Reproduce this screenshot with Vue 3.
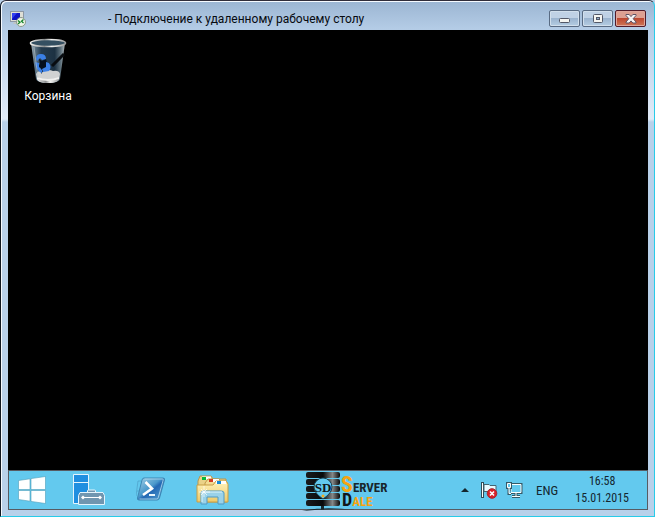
<template>
  <div class="window">
    <header class="titlebar">
      <svg class="app-icon" width="16" height="16" viewBox="0 0 16 16" aria-hidden="true">
        <rect x="0.5" y="0.5" width="13" height="10" fill="#dedfd6" stroke="#8d98a5" />
        <rect x="2" y="2" width="8" height="7" fill="#1013c4" />
        <path d="M2 2h5l-5 6z" fill="#3340f0" />
        <path d="M4 11h5v2H3z" fill="#bfc5c4" />
        <circle cx="11" cy="11" r="4.5" fill="#f0f5e8" stroke="#8c998b" />
        <path d="M8 9.5l2 1.7-2 1.8M13.5 8.5l-2 1.7 2 1.8" fill="none" stroke="#15842b" stroke-width="1.3" />
      </svg>
      <h1>- Подключение к удаленному рабочему столу</h1>
      <div class="controls">
        <button type="button" aria-label="Свернуть">
          <svg width="12" height="12" viewBox="0 0 12 12">
            <rect x="0.5" y="5.5" width="10" height="4" rx="1" fill="#f5f5f1" stroke="#535867" />
          </svg>
        </button>
        <button type="button" aria-label="Развернуть">
          <svg width="12" height="12" viewBox="0 0 12 12">
            <rect x="1.5" y="1.5" width="9" height="8" rx="1" fill="#f5f5f1" stroke="#535867" />
            <rect x="4.5" y="4.5" width="3" height="2" fill="#91adc9" stroke="#535867" />
          </svg>
        </button>
        <button type="button" class="close" aria-label="Закрыть">
          <svg width="12" height="12" viewBox="0 0 12 12">
            <path d="M1 1.5h3.2L6 3.6l1.8-2.1H11v1L8.2 5.7 11 9v1H7.8L6 7.9 4.2 10H1V9l2.8-3.3L1 2.5z" fill="#f7f5f5" stroke="#5f5364" />
          </svg>
        </button>
      </div>
    </header>

    <main class="screen">
      <section class="desktop">
        <a class="shortcut" href="#">
          <svg width="38" height="46" viewBox="0 0 38 46" aria-hidden="true">
            <defs>
              <linearGradient id="glass" x1="0" x2="1" y1="0" y2="0">
                <stop offset="0" stop-color="#a3b0b8" />
                <stop offset="0.12" stop-color="#5d7485" />
                <stop offset="0.3" stop-color="#243b4e" />
                <stop offset="0.7" stop-color="#1c3142" />
                <stop offset="0.88" stop-color="#61747f" />
                <stop offset="1" stop-color="#b4bcc0" />
              </linearGradient>
              <linearGradient id="metal" x1="0" x2="1" y1="0" y2="0">
                <stop offset="0" stop-color="#eeeeec" />
                <stop offset="0.4" stop-color="#8b8e8f" />
                <stop offset="0.6" stop-color="#f3f3f1" />
                <stop offset="1" stop-color="#989a9b" />
              </linearGradient>
            </defs>
            <path d="M2 5h34l-5 36q-1 4-12 4T7 41z" fill="url(#glass)" />
            <path d="M35 16L23 28" stroke="#080c10" stroke-width="3" />
            <path d="M7 36q2-4 8-3 5-2 9 0 6-1 7 3l-1 5q-1 4-11 4T8 41z" fill="#d0d2d2" />
            <path d="M8 39q11 4 22 0v2q-11 4-22 0z" fill="#f0f0ee" />
            <path d="M8 41q11 4 22 0-1 4-11 4T8 41z" fill="url(#metal)" />
            <path d="M10 21l3 2 4-2 1 4 3 1-3 2 1 5-4-1-3 4v-6l-4-1 3-3z" fill="#05101d" />
            <path d="M7 21q0-5 5-5 5 0 5 5l-4 1-2-2-3 3zM6 24l4 1 0 4 3 3 0 3q-6-2-7-11zM17 24l3 1q3 4 0 8l-6 1-1-3 4-2z" fill="#3b80e6" />
            <ellipse cx="19" cy="5" rx="17.5" ry="3.5" fill="#344f61" stroke="url(#metal)" stroke-width="1.6" />
            <path d="M5 9l4 31" stroke="#bac4c8" opacity="0.6" />
          </svg>
          <span>Корзина</span>
        </a>
      </section>

      <footer class="taskbar">
        <nav class="launchers">
          <button type="button" class="start" aria-label="Пуск">
            <svg width="28" height="28" viewBox="0 0 28 28">
              <path d="M0.5 4.5L12 2.8v10.7H0.5zM13 2.6L27.5.5v13H13zM0.5 14.5H12v10.7L0.5 23.5zM13 14.5h14.5v13L13 25.4z" fill="#fff" stroke="#4d9eb9" stroke-width="0.6" />
            </svg>
          </button>
          <button type="button" class="manager" aria-label="Диспетчер серверов">
            <svg width="34" height="34" viewBox="0 0 34 34">
              <path d="M1.5 1.5h15v29h-15z" fill="#1f8fe0" stroke="#e3f4fc" />
              <path d="M1.5 9.5h15" stroke="#e3f4fc" />
              <path d="M15.5 20v-2q0-1 1-1h6q1 0 1 1v2" fill="#7096b0" stroke="#e3f4fc" />
              <path d="M8 19.5h23l1.5 3v9h-26v-9z" fill="#7096b0" stroke="#e3f4fc" />
              <path d="M11 24.5h17" stroke="#fff" />
              <path d="M9 24.5l2-2 2 2-2 2zM26 24.5l2-2 2 2-2 2z" fill="#fff" />
            </svg>
          </button>
          <button type="button" class="powershell" aria-label="Windows PowerShell">
            <svg width="30" height="26" viewBox="0 0 30 26">
              <defs>
                <linearGradient id="shell" x1="0" x2="1" y1="0" y2="1">
                  <stop offset="0" stop-color="#a5d3e8" />
                  <stop offset="0.45" stop-color="#4a98cb" />
                  <stop offset="0.55" stop-color="#2468b4" />
                  <stop offset="1" stop-color="#5aa6d4" />
                </linearGradient>
              </defs>
              <path d="M5 4H2L0 19M1 14h3" fill="none" stroke="#4f9fc8" opacity="0.7" />
              <path d="M8 1h19q2 0 1.5 2l-5 18q-.5 2-2.5 2H3q-2 0-1.5-2L6 3q.5-2 2-2z" fill="url(#shell)" stroke="#3c86b4" />
              <path d="M8.5 2h18q1 0 .7 1l-4.9 17.5q-.3 1.5-1.5 1.5H3.5" fill="none" stroke="#b7dff0" opacity="0.8" />
              <path d="M9.5 5l6.5 6.5-9 6.5" fill="none" stroke="#fff" stroke-width="2.6" />
              <path d="M13 18h6" stroke="#e7f4fb" stroke-width="2" />
            </svg>
          </button>
          <button type="button" class="explorer" aria-label="Проводник">
            <svg width="34" height="30" viewBox="0 0 34 30">
              <defs>
                <linearGradient id="folder" x1="0" x2="0" y1="0" y2="1">
                  <stop offset="0" stop-color="#fff3bb" />
                  <stop offset="1" stop-color="#efca69" />
                </linearGradient>
              </defs>
              <path d="M2 6l2-5h11l2 3h13v22H2z" fill="#ead288" stroke="#b9954b" />
              <path d="M6 1.5h9v3H6z" fill="#fff" />
              <path d="M6 2h4v3H6z" fill="#06b83c" />
              <path d="M9 8l3-4h11l2 3h6v20H9z" fill="#f3dc93" stroke="#c19a48" />
              <path d="M13 4h10v3H13z" fill="#fff" />
              <path d="M13 4h4v3h-4z" fill="#d43b21" />
              <path d="M1 10h16l3-4h10l2 3v18H1z" fill="url(#folder)" stroke="#c99f46" />
              <path d="M20 6h10v3H20z" fill="#fff" />
              <path d="M21 6h4v3h-4z" fill="#168ad5" />
              <path d="M5 29V18q0-2 2-2h18q3 0 3 2v11h-6v-7H11v7z" fill="#9ad2e9" stroke="#4e9bc5" />
              <path d="M6 27V17h20" fill="none" stroke="#e0f5fb" />
              <path d="M8 11v11M3 17h11M5 14l6 6M11 14l-6 6" stroke="#fff" stroke-width="0.7" />
            </svg>
          </button>
        </nav>

        <svg class="brand" width="90" height="42" viewBox="0 0 90 42" role="img" aria-label="Server Dale">
          <defs>
            <linearGradient id="rack" x1="0" x2="1" y1="0" y2="0">
              <stop offset="0" stop-color="#191b1d" />
              <stop offset="0.5" stop-color="#080a0b" />
              <stop offset="0.78" stop-color="#858888" />
              <stop offset="1" stop-color="#080808" />
            </linearGradient>
          </defs>
          <g fill="url(#rack)">
            <rect x="4" y="1" width="34" height="6" rx="2" />
            <rect x="4" y="8" width="34" height="6" rx="2" />
            <rect x="4" y="15" width="34" height="6" rx="2" />
            <rect x="4" y="22" width="34" height="6" rx="2" />
            <rect x="4" y="29" width="34" height="6" rx="2" />
          </g>
          <path d="M0 40q20-5 54-1-28-2-54 1zM19 35h3v4h-3z" fill="#15292f" />
          <path d="M21 28q-9-6-9-12a9 9 0 0 1 18 0q0 6-9 12z" fill="#63c9ee" stroke="#184150" />
          <text class="monogram" x="21" y="21" text-anchor="middle">SD</text>
          <circle cx="21" cy="25" r="1.5" fill="#f6a91c" />
          <text class="server" x="39" y="21"><tspan class="initial">S</tspan>ERVER</text>
          <text class="dale" x="40" y="35"><tspan class="initial">D</tspan>ALE</text>
        </svg>

        <div class="tray">
          <button type="button" aria-label="Показать скрытые значки">
            <svg width="8" height="6" viewBox="0 0 8 6"><path d="M0 5l4-4 4 4z" fill="#14262d" /></svg>
          </button>
          <button type="button" class="alerts" aria-label="Центр поддержки">
            <svg width="17" height="17" viewBox="0 0 17 17">
              <path d="M1.5 0v16" stroke="#304d59" stroke-width="3" />
              <path d="M1.5 1v14" stroke="#fff" />
              <path d="M3 2.5h5l1 1h6v7H9l-1-1H3z" fill="#e9faff" stroke="#446571" />
              <circle cx="11" cy="11.5" r="4.8" fill="#d92229" stroke="#a42a31" />
              <path d="M9 9.5l4 4m0-4l-4 4" stroke="#fff" stroke-width="1.6" />
            </svg>
          </button>
          <button type="button" class="network" aria-label="Сеть">
            <svg width="17" height="17" viewBox="0 0 17 17">
              <path d="M5 2.5h10v8H5zM10 11v3M6 14.5h8" fill="#63c9ee" stroke="#345967" stroke-width="3" />
              <path d="M5 2.5h10v8H5zM10 11v3M6 14.5h8" fill="#63c9ee" stroke="#f7fdff" />
              <path d="M1.5 1.5h3v4h-3zM3 5.5v6h2" fill="#63c9ee" stroke="#345967" stroke-width="3" />
              <path d="M1.5 1.5h3v4h-3zM3 5.5v6h2" fill="#63c9ee" stroke="#fff" />
            </svg>
          </button>
          <button type="button" class="language">ENG</button>
          <button type="button" class="clock">
            <time datetime="2015-01-15T16:58">16:58<br />15.01.2015</time>
          </button>
        </div>
      </footer>
    </main>
  </div>
</template>

<script setup>
</script>

<style>
body {
  margin: 0;
  background: #b9d1ea;
}
</style>

<style scoped>
.window {
  display: flex;
  flex-direction: column;
  box-sizing: border-box;
  min-height: 100vh;
  padding: 0 6px 6px 7px;
  border: 1px solid #29cbe8;
  border-top-color: #302c39;
  border-left-color: #111720;
  border-radius: 6px 6px 0 0;
  background: linear-gradient(#9bb5d2 0, #b4cce6 28px, #dfe9f6 112px, #e1ebf7 118px, #b9d1ea 121px);
  box-shadow: inset 1px 1px #f6faff;
  font-family: Roboto, "Open Sans", sans-serif;
}

.titlebar {
  display: flex;
  align-items: center;
  height: 29px;
  padding: 0 2px;
}

.app-icon {
  flex: none;
  margin-top: 6px;
}

h1 {
  flex: 1;
  margin: 6px 0 0 82px;
  color: #070a10;
  font-size: 12px;
  font-weight: 400;
  line-height: 18px;
  white-space: nowrap;
}

button {
  display: flex;
  align-items: center;
  justify-content: center;
  padding: 0;
  border: 0;
  background: none;
  color: #14272f;
  font-family: inherit;
}

.controls {
  display: flex;
  gap: 2px;
  margin-top: 6px;
}

.controls button {
  box-sizing: border-box;
  width: 31px;
  height: 17px;
  border: 1px solid #596b83;
  border-radius: 2px;
  background: linear-gradient(#bfd1e5 0 45%, #9bb4cf 50%, #b5cde3);
  box-shadow: inset 0 0 0 1px #d1dfec;
}

.controls .close {
  border-color: #511b29;
  background: linear-gradient(#dda092 0 45%, #bd4831 50%, #ce7757);
  box-shadow: inset 0 0 0 1px #dfa69b;
}

.screen {
  display: flex;
  flex: 1;
  flex-direction: column;
  background: #000;
}

.desktop {
  flex: 1;
  padding: 8px 0;
}

.shortcut {
  display: flex;
  flex-direction: column;
  align-items: center;
  gap: 3px;
  width: 80px;
  color: #fff;
  font-size: 12px;
  line-height: 18px;
  text-decoration: none;
}

.taskbar {
  position: relative;
  display: flex;
  align-items: center;
  justify-content: space-between;
  height: 38px;
  border: 1px solid #575b62;
  background: #63c9ee;
}

.launchers,
.tray {
  display: flex;
  align-items: center;
}

.launchers {
  padding-left: 9px;
}

.manager {
  margin-left: 26px;
}

.powershell {
  margin-left: 30px;
}

.explorer {
  margin-left: 30px;
}

.brand {
  position: absolute;
  top: 0;
  left: 46%;
  overflow: visible;
}

.brand text {
  font-family: "Roboto Condensed", "Liberation Sans", sans-serif;
  font-size: 13px;
  font-weight: 700;
}

.brand .monogram {
  fill: #101719;
  font-family: "Liberation Serif", serif;
}

.server {
  fill: #18262b;
}

.server .initial {
  fill: #f6a30f;
  font-size: 22px;
}

.dale {
  fill: #f6a30f;
}

.dale .initial {
  fill: #111719;
  font-size: 18px;
}

.tray {
  padding-right: 18px;
}

.alerts {
  margin-left: 12px;
}

.network {
  margin-left: 8px;
}

.language {
  margin-left: 13px;
  font-family: "Roboto Condensed", Roboto, sans-serif;
  font-size: 13px;
}

.clock {
  margin-left: 17px;
  font-family: "Roboto Condensed", Roboto, sans-serif;
  font-size: 12px;
  line-height: 17px;
  text-align: center;
}
</style>
